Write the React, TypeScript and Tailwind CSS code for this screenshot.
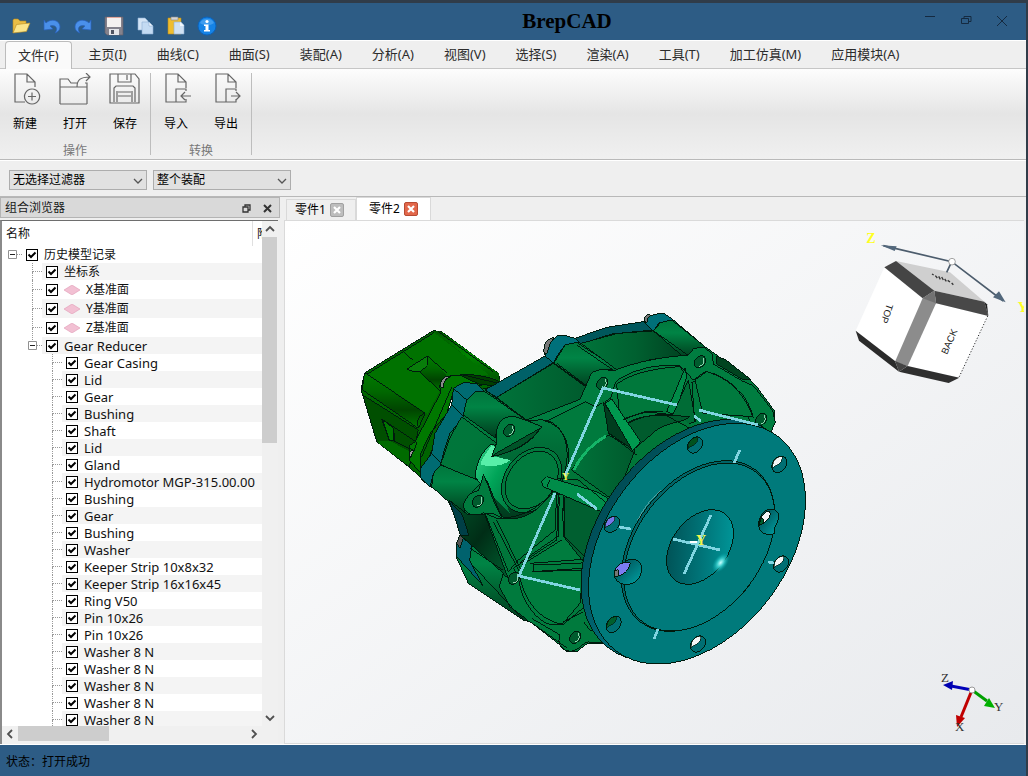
import React from "react";

const menus = [
  "主页(I)", "曲线(C)", "曲面(S)", "装配(A)", "分析(A)", "视图(V)",
  "选择(S)", "渲染(A)", "工具(T)", "加工仿真(M)", "应用模块(A)",
];

type Node = { label: string; level: 0 | 1 | 2; plane?: boolean; open?: boolean };

const parts = [
  "Gear Casing", "Lid", "Gear", "Bushing", "Shaft", "Lid", "Gland",
  "Hydromotor MGP-315.00.00", "Bushing", "Gear", "Bushing", "Washer",
  "Keeper Strip 10x8x32", "Keeper Strip 16x16x45", "Ring V50", "Pin 10x26",
  "Pin 10x26", "Washer 8 N", "Washer 8 N", "Washer 8 N", "Washer 8 N", "Washer 8 N",
];

const tree: Node[] = [
  { label: "历史模型记录", level: 0, open: true },
  { label: "坐标系", level: 1 },
  { label: "X基准面", level: 1, plane: true },
  { label: "Y基准面", level: 1, plane: true },
  { label: "Z基准面", level: 1, plane: true },
  { label: "Gear Reducer", level: 1, open: true },
  ...parts.map((label): Node => ({ label, level: 2 })),
];

function QuickIcon({ kind }: { kind: string }) {
  return (
    <svg viewBox="0 0 20 20" className="size-5" aria-hidden="true">
      {kind === "打开" && (
        <g stroke="#b98a1c" strokeWidth=".6">
          <path d="M2 17V4l1-1h4l2 2h6v4H7z" fill="#e9bd45" />
          <path d="M2 17 5.500 8.500 19 7l-3.500 8.500z" fill="#fbe58a" />
        </g>
      )}
      {kind === "撤销" && (
        <path d="M2 4l2 3c5-5 14-3 14 4 0 3-2 5-5 6 3-3 2-9-5-7l3 3-9 1z" fill="#4a90ea" stroke="#2a62bd" strokeWidth=".7" />
      )}
      {kind === "重做" && (
        <path d="M18 4l-2 3C11 2 2 4 2 11c0 3 2 5 5 6-3-3-2-9 5-7l-3 3 9 1z" fill="#4a90ea" stroke="#2a62bd" strokeWidth=".7" />
      )}
      {kind === "保存" && (
        <g>
          <path d="M1 1h18v18H3l-2-2z" fill="#84828c" stroke="#62606c" strokeWidth=".7" />
          <path d="M3 1h14v10H3z" fill="#f4f1f0" />
          <path d="M3 1h14v1H3z" fill="#e2a79c" />
          <path d="M5 13h10v6H5z" fill="#e5e6ea" />
          <path d="M7 14h3v4H7z" fill="#505563" />
        </g>
      )}
      {kind === "复制" && (
        <g stroke="#8db0d4" strokeWidth=".6">
          <path d="M3 2h7l3 3v9H3z" fill="#d3e4f5" />
          <path d="M7 6h7l4 4v8H7z" fill="#c3dbf3" />
          <path d="M14 6v4h4z" fill="#f1f7fd" />
        </g>
      )}
      {kind === "粘贴" && (
        <g strokeWidth=".6">
          <path d="M2 2h13v16H2z" fill="#eebd2f" stroke="#b98a1c" />
          <path d="M5 1h7v3H5z" fill="#d6d6d6" stroke="#888" />
          <path d="M8 6h7l3 3v9H8z" fill="#cfe1f3" stroke="#8db0d4" />
          <path d="M14 6v4h4z" fill="#f1f7fd" />
        </g>
      )}
      {kind === "信息" && (
        <g>
          <circle cx="10" cy="10" r="9" fill="#1583e6" stroke="#0b62bb" />
          <path d="M3 7a8 8 0 0 1 14 0c-4 3-10 3-14 0z" fill="#5aaef5" opacity=".6" />
          <circle cx="10" cy="5.500" r="1.600" fill="#fff" />
          <path d="M7 8.500h4.500V14H13v1.500H7V14h1.500v-4H7z" fill="#fff" />
        </g>
      )}
    </svg>
  );
}

function TitleBar() {
  const quick = ["打开", "撤销", "重做", "保存", "复制", "粘贴", "信息"];
  return (
    <header className="grid h-[37px] shrink-0 grid-cols-[1fr_auto_1fr] items-center bg-[#2d5c85]">
      <div className="flex gap-[11px] pt-[9px] pl-[11px]">
        {quick.map((k) => (
          <button key={k} type="button" aria-label={k}><QuickIcon kind={k} /></button>
        ))}
      </div>
      <h1 className="pb-[2px] pl-[108px] font-['Liberation_Serif',serif] text-[21px] leading-6 font-bold text-black">BrepCAD</h1>
      <div className="flex items-center justify-end gap-6 pr-[18px] pb-[2px] text-[#152a40]">
        {["M1 1.500h10", "M4 3.500V1.500h7v5H9M1.500 3.500h7v5h-7z", "M1 1l10 10M11 1 1 11"].map((d, i) => (
          <button key={d} type="button" aria-label={["最小化", "还原", "关闭"][i]}>
            <svg viewBox="0 0 12 12" className="size-3" fill="none" stroke="currentColor"><path d={d} /></svg>
          </button>
        ))}
      </div>
    </header>
  );
}

function MenuBar() {
  return (
    <nav className="flex h-[29px] shrink-0 items-end border-t border-b border-t-white border-b-[#c6c6c6] bg-[#efefef] pl-[5px] text-[13px] leading-5 text-[#2c2c2c]">
      <button type="button" className="-mb-px h-7 rounded-t-sm border border-b-0 border-[#bcbcbc] bg-[#fafafa] px-3 pb-[2px]">文件(F)</button>
      <div className="flex h-7 gap-[2px] pl-[3px]">
        {menus.map((m) => <button key={m} type="button" className="px-[14px] whitespace-nowrap">{m}</button>)}
      </div>
    </nav>
  );
}

const ribbonIcons: Record<string, string> = {
  新建: "M16 29H6V1h12l8 8v5M18 1v8h8M23 16a7.500 7.500 0 1 0 .1 0M23 19.500v8M19 23.500h8",
  打开: "M1 31V6h8l3 4h6M26 10h2v21M1 14h27M1 31h27M18 14c0-7 3-10 13-10M27 0l4 4-4 4",
  保存: "M1 1h25l4 5v24H1zM9 1v8h13V1M18 2v5M5 29V15l2-2h17l2 2v14M8 18v11M23 18v11M9 19h13M9 23h13",
  导入: "M16 29H6V1h12l8 8v6M18 1v8h8M26 18v-2H16v13h10v-3M31 23H21M25 19l-4 4 4 4",
  导出: "M16 29H6V1h12l8 8v6M18 1v8h8M26 18v-2H16v13h10v-3M21 23h9M26 19l4 4-4 4",
};

function RibbonGroup({ title, items }: { title: string; items: string[] }) {
  return (
    <section className="flex flex-col items-center border-r border-[#bdbdbd]">
      <div className="flex">
        {items.map((name) => (
          <button key={name} type="button" className="flex w-[50px] flex-col items-center gap-[11px] text-[12px] leading-4 text-black">
            <svg viewBox="0 0 32 32" className="size-8" fill="none" stroke="#666" strokeWidth="1.200"><path d={ribbonIcons[name]} /></svg>
            {name}
          </button>
        ))}
      </div>
      <h2 className="mt-[10px] text-[12px] leading-[18px] text-[#777]">{title}</h2>
    </section>
  );
}

function Filter({ label, value }: { label: string; value: string }) {
  return (
    <div className="relative flex h-5 w-[138px]">
      <select aria-label={label} className="w-full appearance-none border border-[#adadad] bg-[#e1e1e1] pl-[3px] text-[12px] leading-4 text-black">
        <option>{value}</option>
      </select>
      <svg viewBox="0 0 10 6" className="pointer-events-none absolute top-2 right-1 h-[6px] w-[10px]" fill="none" stroke="#555" strokeWidth="1.300"><path d="M1 1l4 4 4-4" /></svg>
    </div>
  );
}

const indent = ["pl-[10px]", "pl-[30px]", "pl-[50px]"];

function TreeRow({ node, index }: { node: Node; index: number }) {
  const last = node.label === "Gear Reducer";
  const latin = node.level === 2 || last;
  return (
    <li className={`flex ${node.plane ? "h-[19px]" : "h-[17px]"} shrink-0 ${indent[node.level]}`}>
      <span className="relative w-[10px] shrink-0">
        <span className={`block border-b border-dotted border-[#999] ${node.plane ? "h-[10px]" : "h-[9px]"} ${node.level ? "border-l" : ""}`} />
        {node.level > 0 && !last && <span className="block h-2 border-l border-dotted border-[#999]" />}
        {node.open && (
          <button type="button" aria-label="折叠" className="absolute top-1 -left-1 block">
            <svg viewBox="0 0 9 9" className="size-[9px]" fill="#fff" stroke="#919191"><path d="M.5.5h8v8h-8z" /><path d="M2 4.500h5" stroke="#222" /></svg>
          </button>
        )}
      </span>
      <label className={`flex min-w-0 flex-1 items-center pl-1 ${index % 2 ? "bg-[#f4f4f4]" : ""}`}>
        <span className="grid shrink-0">
          <input type="checkbox" defaultChecked className="peer col-start-1 row-start-1 size-3 appearance-none border border-black bg-white" />
          <svg viewBox="0 0 12 12" className="pointer-events-none invisible col-start-1 row-start-1 size-3 peer-checked:visible" fill="none" stroke="#000" strokeWidth="2"><path d="M2.500 5.500 5 8l4.500-4.500" /></svg>
        </span>
        {node.plane && (
          <svg viewBox="0 0 16 10" className="ml-[6px] h-[10px] w-4"><path d="M0 5 8 0l8 5-8 5z" fill="#f2c0d3" stroke="#e09ab6" strokeWidth=".6" /></svg>
        )}
        <span className={`ml-[6px] whitespace-nowrap ${latin ? "text-[13px]" : "text-[12px]"}`}>{node.label}</span>
      </label>
    </li>
  );
}

function Arrow({ d, label }: { d: string; label: string }) {
  return (
    <button type="button" aria-label={label} className="grid size-4 shrink-0 place-items-center">
      <svg viewBox="0 0 10 10" className="size-[10px]" fill="none" stroke="#505050" strokeWidth="1.800"><path d={d} /></svg>
    </button>
  );
}

function Browser() {
  return (
    <aside className="flex w-[280px] shrink-0 flex-col">
      <div className="flex h-[21px] items-center border border-[#b4b4b4] bg-[#d9d9d9] pt-px pr-[7px] pl-1 text-[12px] text-[#1a1a1a]">
        <h2 className="flex-1 leading-4">组合浏览器</h2>
        <div className="flex gap-3">
          <button type="button" aria-label="浮动"><svg viewBox="0 0 9 9" className="size-[9px]" fill="none" stroke="#333" strokeWidth="1.300"><path d="M3 3V1h5v5H6M1 3h5v5H1z" /></svg></button>
          <button type="button" aria-label="关闭"><svg viewBox="0 0 9 9" className="size-[9px]" stroke="#333" strokeWidth="2"><path d="M1 1l7 7M8 1 1 8" /></svg></button>
        </div>
      </div>
      <div className="mt-[2px] mr-[2px] flex min-h-0 flex-1 flex-col border-t border-l-2 border-t-[#6e6e6e] border-l-[#8a8a8a] bg-[#f0f0f0]">
        <div className="flex min-h-0 flex-1">
          <div className="flex min-w-0 flex-1 flex-col overflow-hidden bg-white text-[12px] leading-4 text-[#111]">
            <div className="flex h-[25px] shrink-0 items-center justify-between pl-1">
              <span>名称</span>
              <span className="flex h-full w-[10px] items-center overflow-hidden border-l border-[#e0e0e0] pl-1"><span>附</span></span>
            </div>
            <ul className="flex min-h-0 flex-1 flex-col overflow-hidden">
              {tree.map((n, i) => <TreeRow key={i} node={n} index={i} />)}
            </ul>
          </div>
          <div className="flex w-4 shrink-0 flex-col">
            <Arrow label="向上" d="M1 7l4-4 4 4" />
            <div className="flex-1"><div className="h-[206px] w-[15px] bg-[#cdcdcd]" /></div>
            <Arrow label="向下" d="M1 3l4 4 4-4" />
          </div>
        </div>
        <div className="flex h-[18px] shrink-0 pr-4">
          <Arrow label="向左" d="M7 1 3 5l4 4" />
          <div className="flex-1"><div className="h-[15px] w-[91px] bg-[#cdcdcd]" /></div>
          <Arrow label="向右" d="M3 1l4 4-4 4" />
        </div>
      </div>
    </aside>
  );
}

/* Every shape group below uses a third of a scene unit as its own unit. */
function Motor() {
  return (
    <g>
      <path d="M40 235 45 218 155 150 250 92 275 95 445 220 450 240 400 275 300 300 215 535 178 502 80 425 38 285 33 270z" fill="#006400" />
      <path d="M52 222 160 155 252 98 420 225 330 225 278 240 268 275 232 342z" fill="#007200" stroke="none" />
      <path d="M252 92l23 3 172 125 2 22-30-15z" fill="url(#motorEdge)" stroke="none" />
      <path d="M45 218 225 340 205 385 38 270 40 235z" fill="url(#motorRoll)" />
      <path d="M38 285 205 390 190 455 178 500 80 425z" fill="#004f00" />
      <path d="M95 357l35 27 5 38-17 0z" fill="#007600" />
      <path d="M118 422 180 455 178 500 80 425z" fill="#006b00" stroke="none" />
      <path d="M210 217 238 172 290 225 270 272z" fill="url(#motorRoll)" stroke="none" />
      <path d="M170 208 232 168 232 196 212 215 190 214z" fill="#087d0a" />
      <path d="M330 225c30-5 90 5 118 20l-12 13-70-8z" fill="#003f00" />
      <path d="M300 228h35l60 28-75 5-15 30-15 50-50 60-28 60-2 55-32-35 2-45 15-10 78-150-5-20z" fill="#007800" />
      <path d="M265 95 430 215M252 98 52 222M155 150l35 32M205 385 38 270M200 430l-8 22-62-30M95 357l105 70M130 384v38M210 217l60 55M232 168l58 50M205 385c-5-25 0-38 20-45M98 360l20 60M340 225l105 25M305 262 215 470" />
      <path d="M270 260c0-25 20-35 32-30-18 5-22 20-22 35z" fill="#8b8b8b" />
      <path d="M178 460c2-8 8-10 12-8l-8 22z" fill="#999" />
    </g>
  );
}

function Casing() {
  return (
    <g>
      <path d="M345 330 350 300 375 275 455 250 585 170 592 135 620 108 650 108 675 115 770 82 880 65 895 50 920 42 945 42 970 60 1065 140 1100 165 1200 240 1220 260 1275 335 1273 365 1258 402 1150 700 775 1030 710 1032 680 1055 650 1055 630 1035 540 965 520 960 400 860 320 770 318 735 330 705 345 710 290 595 215 540 300 400z" fill="#007a3d" />
      <path d="M310 265 340 248 380 250 405 275 375 275 350 300 340 350 300 400 280 460 272 495 250 520 240 560 213 535 212 505 245 460 255 400 290 340 305 315z" fill="#006b72" />
      <path d="M310 265l40 35M305 315l35 35M245 460l30 32" />
      <path d="M405 270 585 168l25 20-170 104z" fill="#006168" />
      <path d="M440 292 610 190l110 80-10 20-180 72z" fill="url(#panelShade)" />
      <path d="M375 275h30l125 87-40-12-45 25-10 38-95-68 10-45z" fill="url(#cylShade)" />
      <path d="M335 350l105 80-30 40-28 48-10 30-100-55 28-80z" fill="url(#greenBand)" />
      <path d="M272 495 395 545l-40 45-15 55-95-85 5-40z" fill="url(#cylShade)" />
      <path d="M585 168 592 135 620 108h30l25 7 12 12-42 8-22 30-13 24z" fill="#00707a" />
      <path d="M645 135l35-8 130 85-50-5-20 20-20 40-108-78z" fill="url(#cylShade)" />
      <path d="M675 115 770 82 880 65l30 25-125 12-92 30z" fill="#00575c" />
      <path d="M693 130l110-30 105-7 115 75-120 10-100 33z" fill="url(#ribShade)" />
      <path d="M885 68l10-18 25-8h25l25 18-42 8-18 25z" fill="#007079" />
      <path d="M910 92l22-24 33-8 100 80-45 30-15 5z" fill="url(#cylShade)" />
      <path d="M583 165c-5-30 5-50 30-52-12 15-18 26-20 43zM883 65c-4-14 7-26 20-18-10 4-12 12-12 20z" fill="#777" />
      <path d="M408 272l125 90M620 190l100 75M680 135l112 77M910 92l110 78" />
      {/* raised front rim */}
      <path d="M530 360 690 298 725 218 755 207 790 213C860 183 950 170 1015 165l17-20 30-3 25 20 3 30 85 50 35 15 58 75 8 35-16 35-60-35C1180 285 1120 225 1065 215l-35 25-40-42C930 190 850 205 797 245l-15 50-45 25-30-15-120 60z" fill="#007d40" />
      <path d="M800 252c50-35 120-48 190-52l20 30-35 115-90-10-75 25z" fill="#00783b" />
      <path d="M1035 240l35-25c70 20 115 70 138 135l-150-10z" fill="#007a3e" />
      <path d="M1100 168 1128 180 1202 238 1180 240 1100 192z" fill="#00441f" />
      <path d="M1010 230l-35 115-25-10 55-130z" fill="#008a47" />
      <path d="M1015 240l22 125-30 8-40-25z" fill="#006c36" />
      <path d="M1038 242l-12 5 8 120M1090 220c65 28 105 70 120 135" />
      {/* gearing bay between ribs */}
      <path d="M755 300l20 95-110 100-20 35 130 60 60 50 160-170 75-55-85-70-90 10-55 20-60-65z" fill="#007638" stroke="none" />
      <path d="M775 400 855 445 920 390c50-30 75-20 100-40l-85-6c-50 0-90 20-110 30l-50 25z" fill="#005b2d" />
      <path d="M855 450 775 405c-50 30-80 60-110 105l130 95z" fill="url(#panelShade)" />
      <path d="M760 305 850 450 775 398z" fill="#003d1e" />
      <path d="M765 310 785 297 872 425 848 452z" fill="#00994f" />
      <path d="M775 400l85 65M770 410c-45 25-80 60-102 103M830 370c40-25 80-22 115-25l75 40M820 360c40-20 80-28 118-26" />
      <path d="M768 408c-45 25-75 60-97 102" stroke="#15b568" strokeWidth="8" />
      {/* motor-shaft bearing cover */}
      <path d="M440 450c20-40 70-95 140-90 70 8 85 100 60 170-20 70-90 130-175 130l-75-105z" fill="url(#bearing)" />
      <path d="M390 550l-15-20c5-45 20-75 50-98l15 8-15 25 65 20c-30 45-35 110-10 155z" fill="url(#shine)" stroke="none" />
      <path d="M390 550l-15-20c5-45 20-75 50-98l15 8-15 25" />
      <path d="M396 478 424 436l12 6-12 26 58 12c-22 18-58 22-90 14z" fill="#58efa9" stroke="none" />
      <ellipse cx="545" cy="540" rx="107" ry="80" transform="rotate(-53 545 540)" fill="#00783c" />
      <ellipse cx="545" cy="540" rx="95" ry="70" transform="rotate(-53 545 540)" fill="#007a3d" />
      <path d="M582 362c65 15 90 90 65 165M440 655c90 0 150-45 185-110M436 662c90 8 165-40 200-100" />
      <path d="M440 430c-5-45 5-85 55-80l35 12 45 18c-30 50-80 75-150 90z" fill="#007b3e" />
      <path d="M438 460 570 385c-25 40-80 72-145 85z" fill="#005328" />
      <path d="M395 545l5-22 55 130-25-12-30-2c-45 20-75-15-50-45 10-15 25-20 35-22z" fill="#007b3e" />
      <path d="M410 540 455 653 425 590z" fill="#004422" />
      {/* lower side and boss */}
      <path d="M297 600 355 645l50 0 60 165 10 25-130-95z" fill="url(#sideShade)" />
      <path d="M297 600l40 45 20 62-25 0z" fill="#003f47" />
      <path d="M330 705 460 820l-12 40 32 60 55 42-15-2-165-110-37-80z" fill="url(#cylShade)" />
      <path d="M330 705l35 32-6 45 40 75-79-87-2-35z" fill="#00626d" />
      <path d="M330 705l-10 25 10 15 10-30z" fill="#555" />
      <path d="M360 745l100 66M358 785l160 172" />
      <path d="M405 640l35 15c90 10 120-20 175-85l5 10-5 110-110 90-30 35z" fill="#00763a" />
      <path d="M625 585l15 0 5 115 85 75-40 15-140 5 0 20 150-5-10 100-55 65-30 0c-40-10-90-60-100-145l-15-25 130-85z" fill="#007c3e" />
      <path d="M645 590l90 25 65 50-100 120-55-70z" fill="#005f30" />
      <path d="M630 590c-5 30-5 75-5 120M642 592c-5 30-4 70 0 118M625 708l-115 80M635 720l-120 75M645 710l60 60M540 790l160-12M545 815l150-10M510 833c15 70 60 130 130 140l60-50M640 965l60-30" />
      <path d="M440 660l75 155M430 665l78 150" />
      <path d="M575 545 590 530 740 575 790 605 765 640 580 560z" fill="#008c49" />
      <path d="M600 540l-10 22M705 600l30 25M625 535l60 5 80 65" />
      <path d="M540 965l110 78M545 955l85 50c-10 25 5 45 25 48 30 5 40-25 60-27l60 4M700 965l20 25 60 5" />
      {[[478, 391], [384, 604], [757, 250], [1050, 185], [1234, 358], [492, 835], [676, 1012]].map(([x, y]) => (
        <g key={`${x}-${y}`}>
          <ellipse cx={x} cy={y} rx="20" ry="15" transform={`rotate(-53 ${x} ${y})`} fill="#005c2e" />
          <path d={`M${x - 2} ${y + 14}q18-3 12-26`} stroke="#8fd1ad" />
        </g>
      ))}
    </g>
  );
}

const holes = [[375, 105, "#00521e"], [628, 163, "#f4f6f6"], [126, 343, "#7776e8"], [633, 462, "#f4f6f6"], [131, 643, "#005f2d"], [384, 702, "#f4f6f6"]] as const;

function Flange() {
  return (
    <g>
      <ellipse cx="360" cy="391" rx="405" ry="273" transform="rotate(-53 360 391)" fill="url(#flangeSide)" />
      <ellipse cx="381" cy="401" rx="403" ry="272" transform="rotate(-53 381 401)" fill="#007a7b" />
      <ellipse cx="384" cy="408" rx="286" ry="192" transform="rotate(-53 384 408)" fill="#006468" />
      <ellipse cx="388" cy="411" rx="282" ry="188" transform="rotate(-53 388 411)" fill="#007a7b" />
      <path d="M203 330c18-36 42-66 70-90" stroke="#6fb0b0" strokeWidth="2" />
      {holes.map(([x, y, c]) => (
        <g key={`${x}-${y}`}>
          <ellipse cx={x} cy={y} rx="27" ry="20" transform={`rotate(-53 ${x} ${y})`} fill="#006f73" />
          <path d={`M${x - 20} ${y + 10}c-2-18 12-36 28-32 2 10-6 22-20 26z`} fill={c} strokeWidth="2" />
        </g>
      ))}
      <path d="M615 300c18 10 10 35-3 55l2 15c-20 10-48 0-48-25 0-28 20-55 49-45z" fill="url(#bore)" />
      <path d="M568 345c0-20 15-42 30-42 8 12-5 35-30 42z" fill="#f4f6f6" />
      <path d="M566 347l8-22c12 0 10 15-8 22z" fill="#005f2d" />
      <path d="M160 460c15-18 45-15 53 5 8 30-15 62-50 58-30-5-40-35-20-55z" fill="url(#bore)" />
      <path d="M135 480c8-18 20-24 46-22-2 20-18 35-35 40z" fill="#7b7cf0" />
      <path d="M134 482l11-3v20h-10z" fill="#777" />
      <ellipse cx="390" cy="411" rx="125" ry="84" transform="rotate(-53 390 411)" fill="url(#bore)" />
      <ellipse cx="452" cy="458" rx="34" ry="20" transform="rotate(-53 452 458)" fill="url(#glow)" stroke="none" />
    </g>
  );
}

function ViewCube() {
  return (
    <g stroke="none">
      <path d="M133 142 248 235 165 430 47 332z" fill="#fff" />
      <path d="M288 250 443 288 355 472 203 438z" fill="#fff" />
      <path d="M168 123 330 157 433 245 283 212z" fill="#cfcfcf" />
      <path d="M133 142l35-19 115 89-35 23z" fill="#454545" />
      <path d="M283 212l150 33 12 43-157-38z" fill="#484848" />
      <path d="M433 245l8 8 4 35z" fill="#1f1f1f" />
      <path d="M248 235l35-23 5 38-85 188-38-13z" fill="#8c8c8c" />
      <path d="M248 235l35-23 5 38z" fill="#727272" />
      <path d="M47 332l118 91 12 32L57 362z" fill="#2b2b2b" />
      <path d="M203 438l155 35-32 16-149-34z" fill="#2f2f2f" />
      <path d="M165 423l38 15-26 17z" fill="#444" />
      <path d="M443 288 357 472" stroke="#111" strokeWidth="3" strokeDasharray="3 6" />
      <path d="M130 77 335 125 490 243M335 125l-15 32" stroke="#4c5c6c" strokeWidth="5" fill="none" />
      <path d="M122 76l48 3-6 14zM497 247l-38-15 18-18z" fill="#52677b" />
      <circle cx="336" cy="125" r="10" fill="#fff" stroke="#777" strokeWidth="2" />
      <path d="M276 162l5 3m5 2 6 7m4-5 5 9m4-7 5 9m4-3 5 7m4-3 7 5m5 3 5 5" stroke="#333" strokeWidth="4" />
      <g fontFamily="Liberation Sans, sans-serif" fontSize="29" fill="#222">
        <text transform="translate(141 250) rotate(109)">TOP</text>
        <text transform="translate(321 405) rotate(-66)">BACK</text>
      </g>
      <g fontFamily="Liberation Serif, serif" fontSize="42" fontWeight="bold" fill="#ffff20">
        <text x="79" y="68">Z</text>
        <text x="533" y="275">Y</text>
      </g>
    </g>
  );
}

const gradients: [string, string, string, string[]][] = [
  ["motorEdge", "0", "1", ["#005500", "#008400", "#005500"]],
  ["motorRoll", "0", "1", ["#007a00", "#006800", "#004500", "#007600"]],
  ["cylShade", "0", "1", ["#00763c", "#008445", "#006030", "#003b1e"]],
  ["panelShade", "1", "0", ["#00733a", "#005a2d"]],
  ["greenBand", "1", "1", ["#00763c", "#00763a", "#006a35"]],
  ["ribShade", "1", "0", ["#00743a", "#006030", "#003e1f"]],
  ["sideShade", "1", "1", ["#00542a", "#002d16", "#005f30"]],
  ["bearing", "0", "1", ["#007a3e", "#006332", "#00381c"]],
  ["shine", "1", "1", ["#37d18b", "#00a458", "#00703a"]],
  ["flangeSide", "0", "1", ["#004c55", "#006b78", "#003c44"]],
  ["bore", "1", "1", ["#00474b", "#007276", "#00a3a5"]],
];

function Scene() {
  return (
    <svg viewBox="285 221 739 522" preserveAspectRatio="xMinYMin meet" className="size-full" role="img" aria-label="零件2">
      <defs>
        {gradients.map(([id, x2, y2, stops]) => (
          <linearGradient key={id} id={id} x1="0" y1="0" x2={x2} y2={y2}>
            {stops.map((c, i) => <stop key={i} offset={i / (stops.length - 1)} stopColor={c} />)}
          </linearGradient>
        ))}
        <radialGradient id="glow">
          <stop offset="0" stopColor="#c8ffff" />
          <stop offset=".4" stopColor="#3ccccb" />
          <stop offset="1" stopColor="#00a3a5" stopOpacity="0" />
        </radialGradient>
      </defs>
      <g shapeRendering="crispEdges" fill="none" stroke="#001a0d" strokeWidth="3">
        <g transform="translate(350 300) scale(.33333)"><Motor /><Casing /></g>
        <g transform="translate(570 410) scale(.33333)"><Flange /></g>
      </g>
      <g shapeRendering="crispEdges" fill="none" stroke="#80d5e1" strokeWidth="2.700">
        <path d="M565 476 603 388 677 405M699 410 758 425M694 416l7 5M555 493 519 576 580 590M577 494l20 15" />
        <path d="M740 450l-6 13M619 527l12 2M768 562l6 1M658 629l-4 10M711 515l-27 59M673 539l47 11" />
      </g>
      <path d="M690 542l7 0" stroke="#fff" strokeWidth="2" />
      <g fill="#f5f54a" fontFamily="Liberation Serif, serif" fontWeight="bold" fontSize="14">
        <text x="562" y="480" fontSize="10">Y</text>
        <text x="696" y="545">Y</text>
      </g>
      <g transform="translate(840 220) scale(.33333)"><ViewCube /></g>
      <g strokeWidth="3" fill="none">
        <path d="M972 690 951 686" stroke="#0000b8" />
        <path d="M972 690l15 11" stroke="#00a000" />
        <path d="M972 690l-11 27" stroke="#c00000" />
      </g>
      <path d="M943 685l10-4-1 9z" fill="#0000b0" />
      <path d="M995 708l-11-2 5-8z" fill="#00b000" />
      <path d="M957 727l-1-12 9 3z" fill="#c00000" />
      <circle cx="972" cy="690" r="3" fill="#fff" stroke="#999" />
      <g fontFamily="Liberation Serif, serif" fontSize="13" fill="#333">
        <text x="941" y="682">Z</text><text x="994" y="711">Y</text><text x="955" y="731">X</text>
      </g>
    </svg>
  );
}

function DocTab({ title, active }: { title: string; active?: boolean }) {
  return (
    <div className={`flex items-center gap-1 border border-b-0 border-[#d9d9d9] text-[12px] text-black ${active ? "h-[23px] bg-white px-3" : "h-[21px] bg-[#efefef] pr-[11px] pl-2"}`}>
      <button type="button" role="tab" aria-selected={!!active}>{title}</button>
      <button type="button" aria-label={`关闭${title}`}>
        <svg viewBox="0 0 14 14" className="size-[14px]">
          <rect x=".5" y=".5" width="13" height="13" rx="1.500" fill={active ? "#e2674a" : "#bdbdbd"} stroke={active ? "#b74b33" : "#a0a0a0"} />
          <path d="M4 4l6 6M10 4l-6 6" stroke="#fff" strokeWidth="2.200" />
        </svg>
      </button>
    </div>
  );
}

export default function App() {
  return (
    <div className="flex h-screen flex-col overflow-hidden border-t-[3px] border-r-2 border-[#303c49] bg-[#efefef] font-['Noto_Sans','Noto_Sans_CJK_SC',sans-serif]">
      <TitleBar />
      <MenuBar />
      <div className="flex h-[91px] shrink-0 border-b border-[#b9b9b9] bg-linear-to-b from-[#fdfdfd] via-[#e5e5e5] to-[#f0f0f0] pt-1 pb-1">
        <RibbonGroup title="操作" items={["新建", "打开", "保存"]} />
        <RibbonGroup title="转换" items={["导入", "导出"]} />
      </div>
      <div className="flex h-[37px] shrink-0 gap-[6px] border-t border-b border-t-white border-b-[#b8b8b8] pt-[9px] pl-[9px]">
        <Filter label="选择过滤器" value="无选择过滤器" />
        <Filter label="选择范围" value="整个装配" />
      </div>
      <div className="flex min-h-0 flex-1 gap-1">
        <Browser />
        <main className="flex min-w-0 flex-1 flex-col pr-[2px]">
          <div role="tablist" className="flex h-[23px] shrink-0 items-end pl-[2px]">
            <DocTab title="零件1" />
            <DocTab title="零件2" active />
          </div>
          <div className="min-h-0 flex-1 overflow-hidden border border-r-0 border-[#dadada] bg-linear-to-br from-white to-[#e8eaed]">
            <Scene />
          </div>
        </main>
      </div>
      <footer className="flex h-8 shrink-0 items-center border-t border-white bg-[#2d5c85] pt-[2px] pl-[6px] text-[12px] text-black">状态：打开成功</footer>
    </div>
  );
}
